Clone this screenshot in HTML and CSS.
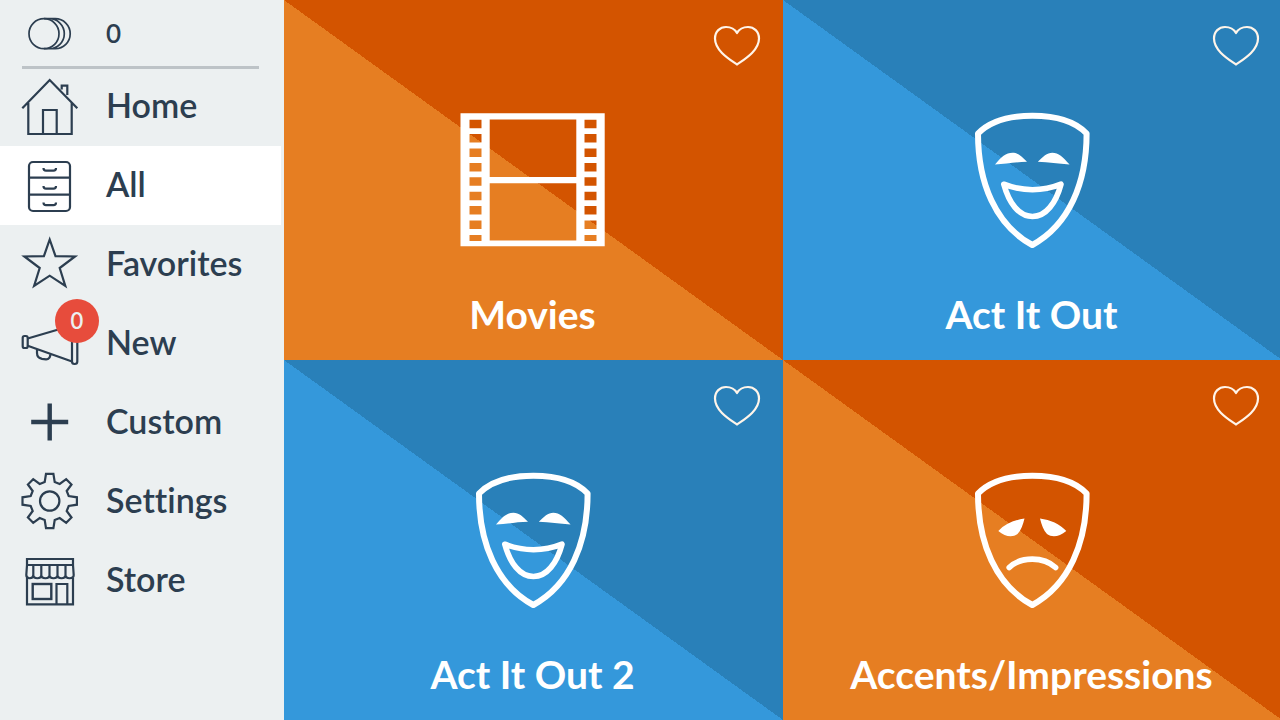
FILE: index.html
```html
<!DOCTYPE html>
<html lang="en">
<head>
<meta charset="utf-8">
<meta name="viewport" content="width=device-width, initial-scale=1">
<title>All Decks</title>
<link rel="stylesheet" href="styles.css">
</head>
<body>
<svg class="sprite" aria-hidden="true">
  <symbol id="mask" viewBox="0 0 150 144">
    <path d="M21 25.500C34 12 54 7.700 75.300 7.700S117 12 129.600 25.500C129.600 75 112 117 75.300 137C38.500 117 21 75 21 25.500Z" fill="none" stroke="currentColor" stroke-width="6" stroke-linejoin="round"/>
  </symbol>
  <symbol id="happy" viewBox="0 0 150 144">
    <use href="#mask"/>
    <path d="M38 56.500C44 49 49 44.700 55.500 44.700C61 44.700 65 48.500 70 53.800C59 54 49 56 38 56.500ZM112.600 56.500C106 49 101.500 44.700 95.300 44.700C90 44.700 86 48.500 80.800 53.800C92 54 101 56 112.600 56.500Z" fill="currentColor"/>
    <path d="M46.800 76.200C65 83.500 86 83.500 104 76.200C99 95 89 108.500 75.400 108.500S52 95 46.800 76.200Z" fill="none" stroke="currentColor" stroke-width="5.600" stroke-linejoin="round"/>
  </symbol>
  <symbol id="sad" viewBox="0 0 150 144">
    <use href="#mask"/>
    <path d="M41.300 63C48 56 57 52 67.500 50.600C66 57 64 62.500 60.500 66C55 70 48 68.500 41.300 63ZM109.300 63C102.500 56 93.500 52 83 50.600C84.500 57 86.500 62.500 90 66C95.500 70 102.500 68.500 109.300 63Z" fill="currentColor"/>
    <path d="M52.200 99.500C64 88.300 86.500 88.300 98.600 99.500" fill="none" stroke="currentColor" stroke-width="5.600" stroke-linecap="round"/>
  </symbol>
  <symbol id="heart" viewBox="0 0 50 44">
    <path d="M25 40.500C17 35 3 26.500 3 14.500C3 7.500 8 3 14 3C19 3 23 5.500 25 9C27 5.500 31 3 36 3C42 3 47 7.500 47 14.500C47 26.500 33 35 25 40.500Z" fill="none" stroke="currentColor" stroke-width="2.200" stroke-linejoin="round"/>
  </symbol>
</svg>
<div class="app">
  <aside class="sidebar">
    <div class="row coins">
      <svg class="icon" viewBox="0 0 60 61" aria-hidden="true"><g stroke-width="1.700"><circle cx="24" cy="30.700" r="15"/><path d="M24 15.700H29.300A15 15 0 0 1 29.300 45.700H24M29.300 15.700H35.200A15 15 0 0 1 35.200 45.700H29.300"/></g></svg>
      <span>0</span>
    </div>
    <hr class="divider">
    <nav class="menu">
      <a class="row" href="#home">
        <svg class="icon" viewBox="0 0 60 61" aria-hidden="true"><path d="M2.300 32.300L29.700 4L57.300 32.300M8.300 27V58H51.700V27M23 58V34H36.700V58M41.700 13.500V9.700H47.300V19"/></svg>
        <span class="label">Home</span>
      </a>
      <a class="row selected" href="#all" aria-current="page">
        <svg class="icon" viewBox="0 0 60 61" aria-hidden="true"><rect x="9" y="7" width="41" height="49" rx="4"/><path d="M9 22.700H50M9 39.700H50M23.500 13C23.500 15 24.500 15.700 26 15.700H33.500C35 15.700 36 15 36 13M23.500 31C23.500 33 24.500 33.700 26 33.700H33.500C35 33.700 36 33 36 31M23.500 47.500C23.500 49.500 24.500 50.200 26 50.200H33.500C35 50.200 36 49.500 36 47.500"/></svg>
        <span class="label">All</span>
      </a>
      <a class="row" href="#favorites">
        <svg class="icon" viewBox="0 0 60 61" aria-hidden="true"><path d="M29.700 5.500L35.500 22.200L55 22.500L39.700 34L45.300 52L29.700 41.700L14.100 52L19.700 34L4.400 22.500L23.900 22.200Z"/></svg>
        <span class="label">Favorites</span>
      </a>
      <a class="row" href="#new">
        <svg class="icon" viewBox="0 0 60 61" aria-hidden="true"><rect x="2.700" y="23" width="5" height="12" rx="1.800"/><path d="M7.700 25.500L52 12.500M7.700 32.700L52 48.500M17 36.500V40C17 44 19.500 45.300 22 45.800L26 46.400C29 46.500 30.300 44 30.300 41.200"/><rect x="52" y="9" width="5.300" height="42" rx="2.500"/></svg>
        <span class="label">New</span>
        <span class="badge">0</span>
      </a>
      <a class="row" href="#custom">
        <svg class="icon" viewBox="0 0 60 61" aria-hidden="true"><path d="M29.700 11.500V48.500M11.200 30H48.200" stroke-width="4.400"/></svg>
        <span class="label">Custom</span>
      </a>
      <a class="row" href="#settings">
        <svg class="icon" viewBox="0 0 60 61" aria-hidden="true"><g transform="translate(29.700 30)"><circle r="9.700"/><path d="M-5 -19L-3.700 -27.200H3.700L5 -19L10 -17L16.500 -21.800L21.800 -16.500L17 -10L19 -5L27.200 -3.700V3.700L19 5L17 10L21.800 16.500L16.500 21.800L10 17L5 19L3.700 27.200H-3.700L-5 19L-10 17L-16.500 21.800L-21.800 16.500L-17 10L-19 5L-27.200 3.700V-3.700L-19 -5L-17 -10L-21.800 -16.500L-16.500 -21.800L-10 -17Z"/></g></svg>
        <span class="label">Settings</span>
      </a>
      <a class="row" href="#store">
        <svg class="icon" viewBox="0 0 60 61" aria-hidden="true"><path d="M7 15V9H53V15M7 28V54.300H53V28M7 15H53M36.500 54V34H47.300V54"/><path d="M7 15L6.300 25C6.300 29.300 13.300 29.300 13.300 25V15V25C13.300 29.300 21.300 29.300 21.300 25V15V25C21.300 29.300 29.500 29.300 29.500 25V15V25C29.500 29.300 37.500 29.300 37.500 25V15V25C37.500 29.300 45.500 29.300 45.500 25V15V25C45.500 29.300 53.700 29.300 53.700 25L53 15"/><rect x="12.700" y="34" width="18.600" height="15" stroke-width="2.400"/></svg>
        <span class="label">Store</span>
      </a>
    </nav>
  </aside>
  <main class="decks">
    <article class="deck orange">
      <a class="deck-link" href="#movies">
        <svg class="art" viewBox="0 0 150 144" aria-hidden="true"><path fill="currentColor" fill-rule="evenodd" d="M2.500 5.300H146.700V138.300H2.500ZM31.700 11.500V69H118.300V11.500ZM31.700 75.200V132.500H118.300V75.200ZM11.500 11.700v8.500h12v-8.500zm0 14.400v8.500h12v-8.500zm0 14.400v8.500h12v-8.500zm0 14.400v8.500h12v-8.500zm0 14.400v8.500h12v-8.500zm0 14.400v8.500h12v-8.500zm0 14.400v8.500h12v-8.500zm0 14.400v8.500h12v-8.500zm0 14.400v6h12v-6zM126.500 11.700v8.500h12v-8.500zm0 14.400v8.500h12v-8.500zm0 14.400v8.500h12v-8.500zm0 14.400v8.500h12v-8.500zm0 14.400v8.500h12v-8.500zm0 14.400v8.500h12v-8.500zm0 14.400v8.500h12v-8.500zm0 14.400v8.500h12v-8.500zm0 14.400v6h12v-6z"/></svg>
        <span>Movies</span>
      </a>
      <button class="like" type="button" aria-label="Favorite Movies"><svg viewBox="0 0 50 44"><use href="#heart"/></svg></button>
    </article>
    <article class="deck blue">
      <a class="deck-link" href="#act-it-out">
        <svg class="art" viewBox="0 0 150 144" aria-hidden="true"><use href="#happy"/></svg>
        <span>Act It Out</span>
      </a>
      <button class="like" type="button" aria-label="Favorite Act It Out"><svg viewBox="0 0 50 44"><use href="#heart"/></svg></button>
    </article>
    <article class="deck blue">
      <a class="deck-link" href="#act-it-out-2">
        <svg class="art" viewBox="0 0 150 144" aria-hidden="true"><use href="#happy"/></svg>
        <span>Act It Out 2</span>
      </a>
      <button class="like" type="button" aria-label="Favorite Act It Out 2"><svg viewBox="0 0 50 44"><use href="#heart"/></svg></button>
    </article>
    <article class="deck orange">
      <a class="deck-link" href="#accents">
        <svg class="art" viewBox="0 0 150 144" aria-hidden="true"><use href="#sad"/></svg>
        <span>Accents/Impressions</span>
      </a>
      <button class="like" type="button" aria-label="Favorite Accents/Impressions"><svg viewBox="0 0 50 44"><use href="#heart"/></svg></button>
    </article>
  </main>
</div>
</body>
</html>
```

FILE: styles.css
```css
* {
  box-sizing: border-box;
}

body {
  margin: 0;
  font-family: Lato, "Open Sans", sans-serif;
  font-variant-ligatures: none;
  color: #2c3e50;
  background: #ecf0f1;
}

.sprite {
  display: none;
}

.app {
  display: flex;
  min-height: 100vh;
  overflow: hidden;
}

.sidebar {
  flex: 0 0 284px;
  padding-right: 3px;
  background: #ecf0f1;
}

.row {
  position: relative;
  display: flex;
  align-items: center;
  gap: 26px;
  height: 79px;
  padding-left: 20px;
  font-size: 34px;
  font-weight: 600;
  line-height: 40px;
  color: inherit;
  text-decoration: none;
}

.selected {
  background: #fff;
}

.coins {
  height: 66px;
  font-size: 26px;
}

.label {
  padding-bottom: 4px;
}

.divider {
  height: 3px;
  margin: 0 22px -2px;
  border: 0;
  background: #bdc3c7;
}

.icon {
  flex: none;
  width: 60px;
  height: 61px;
  fill: none;
  stroke: currentColor;
  stroke-width: 2.2;
}

.badge {
  position: absolute;
  top: -5px;
  left: 55px;
  width: 44px;
  height: 44px;
  border-radius: 50%;
  background: #e74c3c;
  color: #ecf0f1;
  font-size: 22px;
  line-height: 44px;
  text-align: center;
}

.decks {
  flex: 1;
  display: grid;
  grid-template-columns: 1fr 1fr;
  grid-auto-rows: 1fr;
  margin-right: -2px;
}

.deck {
  position: relative;
  display: flex;
  color: #fff;
}

.orange {
  background: linear-gradient(to top right, #e67e22 50%, #d35400 50%);
}

.blue {
  background: linear-gradient(to top right, #3498db 50%, #2980b9 50%);
}

.deck-link {
  flex: 1;
  display: flex;
  flex-direction: column;
  align-items: center;
  justify-content: flex-end;
  gap: 38px;
  padding: 24px 18px 22px 16px;
  font-size: 39px;
  font-weight: 700;
  line-height: 48px;
  color: inherit;
  text-decoration: none;
}

.art {
  width: 150px;
  height: 144px;
}

.like {
  position: absolute;
  top: 24px;
  right: 21px;
  width: 50px;
  height: 44px;
  padding: 0;
  border: 0;
  background: none;
  color: #fff5ea;
  cursor: pointer;
}

.like svg {
  display: block;
  width: 50px;
  height: 44px;
}
```
